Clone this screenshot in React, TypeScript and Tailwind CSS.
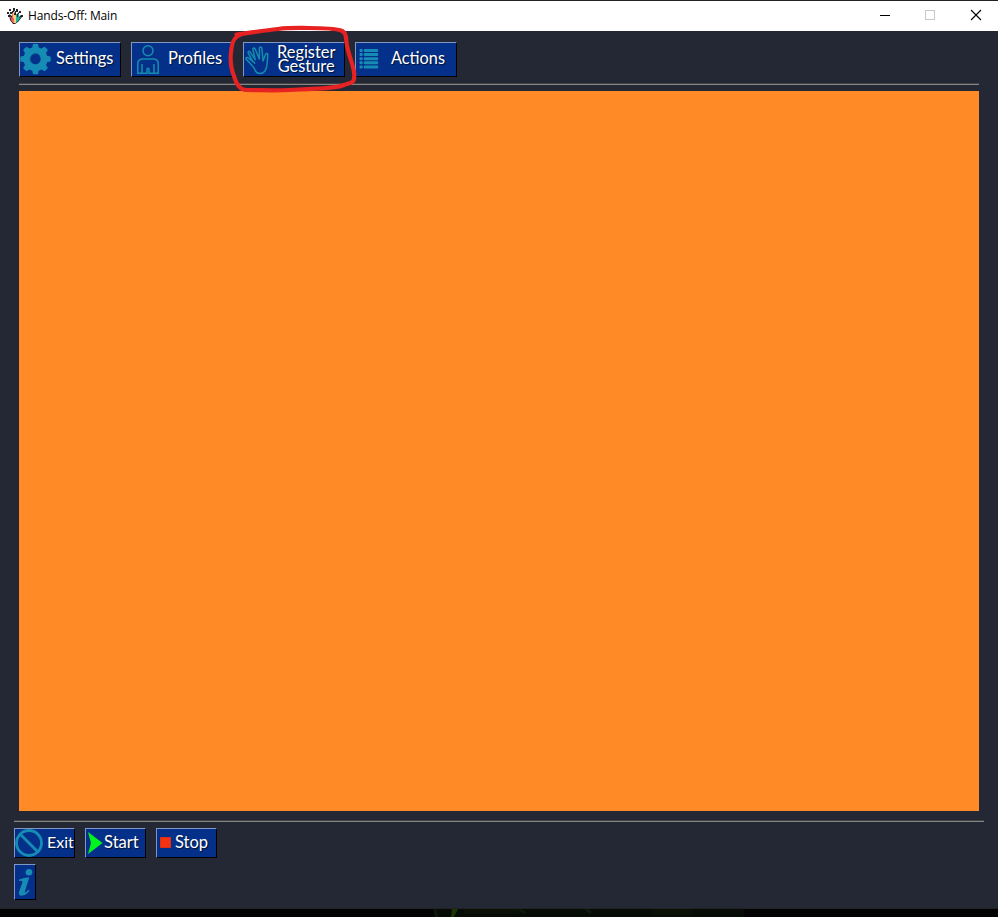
import React from "react";

const label =
  "relative -top-px whitespace-nowrap font-['Lato','Noto_Sans',sans-serif] text-white [text-shadow:1px_1px_1px_#000a]";
const button =
  "flex items-center bg-[#05308a] border border-t-[#7f97c4] border-l-[#7f97c4] border-b-black border-r-black";

function AppIcon() {
  return (
    <svg className="h-4 w-4" viewBox="0 0 16 16">
      <path d="M0 4h2v2H0zM2 1h2v2H2zM3 4h2v2H3zM6 0h2v3H6zM9 1h2v3H9zM12 3h2v2h-2zM14 7h2v2h-2zM1 7h2v2H1z" fill="#26242c" />
      <path d="M2 6l3 2V3h2v3l1-3h1v4l3-3v5l2-2 1 2-4 5-3 2H6L3 12z" fill="#202028" />
      <path d="M3 8l2 2V5h2v10H6l-2-3z" fill="#f06a61" />
      <path d="M6 4h1v6H6zM7 7h2v8H7z" fill="#f5cf79" />
      <path d="M9 6h1v3h1V6h1v4l1-1h1l-3 4-2 2z" fill="#1eb49b" />
      <path d="M4 10h2v2H4z" fill="#e94570" />
    </svg>
  );
}

function Gear() {
  return (
    <svg className="-mt-0.5 h-8 w-8 shrink-0" viewBox="0 0 32 32">
      <g fill="#168cb5">
        {[0, 45, 90, 135].map((a) => (
          <path key={a} transform={`rotate(${a} 15.5 16)`} d="M12.2 5l.8-4q2.5-.6 5 0L18.8 5v22l-.8 4q-2.5.6-5 0L12.2 27z" />
        ))}
      </g>
      <circle cx="15.5" cy="16" r="12" fill="#168cb5" />
      <circle cx="15.5" cy="16" r="5.2" fill="#05308a" />
      <path d="M11.7 19.8A5.4 5.4 0 0 1 19.5 12.2" fill="none" stroke="#0b5793" strokeWidth="1" />
    </svg>
  );
}

function Person() {
  return (
    <svg className="-mt-0.5 h-8 w-8 shrink-0" viewBox="0 0 32 32" fill="none" stroke="#168cad" strokeWidth="1.5">
      <circle cx="16" cy="7.8" r="5" />
      <path d="M10 21v9.2H5.8V21q0-5 5-5h10.4q5 0 5 5v9.2H22V21M10 30.2h5v-4q0-1 1-1t1 1v4h5" />
    </svg>
  );
}

function Hand() {
  return (
    <svg className="-mt-0.5 -ml-px h-8 w-8 shrink-0" viewBox="0 0 32 32" fill="none" stroke="#168cad" strokeWidth="1.5" strokeLinecap="round" strokeLinejoin="round">
      <path d="M9 22.5L3 16q-.2-2 1.8-1.5l4.7 3.7L5 9.6q.2-2 2-.8l5.2 7.8L9.8 5.8q.8-1.8 2.3 0L16.3 16 16.4 5q1.2-1.8 2.4 0L20 18l2.8-7.2q1.8-1 2 .8L24.2 20q-.4 5-2.2 8-2 2.6-5 2.6-3.6-.2-5-3.6-.8-2.5-3-4.5" />
      <path d="M9.5 18.2q1.6.6 2.2 2" />
    </svg>
  );
}

function List() {
  return (
    <svg className="-mt-0.5 h-8 w-8 shrink-0" viewBox="0 0 32 32" fill="#168cb5">
      {[6, 10.1, 14.2, 18.3, 22.4].map((y) => (
        <g key={y}>
          <rect x="3.5" y={y} width="3.2" height="3" rx="1" />
          <rect x="7.8" y={y} width="14.4" height="3" rx="1" />
        </g>
      ))}
    </svg>
  );
}

export default function App() {
  return (
    <div className="relative flex h-[917px] w-[998px] flex-col overflow-hidden bg-[#242834]">
      <header className="flex h-[31px] shrink-0 items-center border-t border-[#222] bg-white pl-[7px]">
        <AppIcon />
        <span className="ml-[5px] whitespace-nowrap font-['Open_Sans','Noto_Sans',sans-serif] text-[12px] leading-4 tracking-[-0.14px] text-black">Hands-Off: Main</span>
        <svg className="ml-auto h-[30px] w-[138px]" viewBox="0 0 138 30" fill="none" shapeRendering="crispEdges">
          <path d="M20 14.5h10" stroke="#000" />
          <rect x="65.5" y="9.5" width="9" height="9" stroke="#c8c8c8" />
          <path d="M111 9l10 10M121 9l-10 10" stroke="#000" strokeWidth="1.1" shapeRendering="auto" />
        </svg>
      </header>

      <nav className="mt-[11px] ml-[19px] flex h-[35px] shrink-0 gap-[10px]">
        <button className={`${button} w-[102px]`}>
          <Gear />
          <span className={`${label} ml-1 text-[16.4px]`}>Settings</span>
        </button>
        <button className={`${button} w-[102px]`}>
          <Person />
          <span className={`${label} ml-1 text-[16.6px]`}>Profiles</span>
        </button>
        <button className={`${button} w-[102px]`}>
          <Hand />
          <span className={`${label} ml-[2px] flex flex-col items-center text-[16.4px] leading-[14px]`}>
            <span>Register</span>
            <span>Gesture</span>
          </span>
        </button>
        <button className={`${button} w-[102px]`}>
          <List />
          <span className={`${label} ml-[3px] text-[16.3px]`}>Actions</span>
        </button>
      </nav>

      <div className="mt-[6px] ml-[19px] h-[2px] w-[960px] shrink-0 border-t border-b border-t-[#414141] border-b-[#858585]" />
      <main className="mt-[6px] ml-[19px] h-[720px] w-[960px] shrink-0 bg-[#ff8a26]" />
      <div className="mt-[9px] ml-[14px] h-[2px] w-[970px] shrink-0 border-t border-b border-t-[#414141] border-b-[#858585]" />

      <div className="mt-[6px] ml-[14px] flex h-[30px] shrink-0 gap-[10px]">
        <button className={`${button} w-[61px]`}>
          <svg className="h-7 w-7 shrink-0" viewBox="0 0 28 28" fill="none" stroke="#168cb5" strokeWidth="2.8">
            <circle cx="14" cy="14" r="12.5" />
            <path d="M5.5 5.5l17 17" />
          </svg>
          <span className={`${label} ml-1 text-[16px]`}>Exit</span>
        </button>
        <button className={`${button} w-[61px]`}>
          <svg className="h-7 w-[18px] shrink-0" viewBox="0 0 18 28">
            <path d="M2 3l14.5 11L2 25l3-11z" fill="#00f51e" />
          </svg>
          <span className={`${label} text-[16.6px]`}>Start</span>
        </button>
        <button className={`${button} w-[61px]`}>
          <span className="-mt-0.5 ml-[3px] h-[11px] w-[11px] shrink-0 border border-[#d9301b] bg-[#f53311]" />
          <span className={`${label} ml-1 text-[16.5px]`}>Stop</span>
        </button>
      </div>
      <button className={`${button} mt-[6px] ml-[14px] h-[36px] w-[22px] shrink-0`}>
        <svg className="h-[34px] w-[20px]" viewBox="0 0 20 34" fill="#168cb5">
          <circle cx="14" cy="7.3" r="3.3" />
          <path d="M4 14.5q5-1.7 10.3-2.2L10 26q-.5 2 .8 1.3l3-2.6.9.9q-4 5.2-8 5.2-3.6 0-2.5-4.2L7.3 17.5q.4-1.7-1-1.7L4 16z" />
        </svg>
      </button>

      <footer className="mt-auto flex h-[9px] shrink-0 border-t border-[#222] bg-[#030303]">
        <svg className="ml-[434px] h-2 w-[310px]" viewBox="0 0 310 8">
          <path d="M0 0h310v8H0z" fill="#060b05" />
          <path d="M30 0h55v5H30zM218 0h40v6h-40z" fill="#0a1006" />
          <path d="M18 0h6l-4 8h-3z" fill="#1b3508" />
          <path d="M0 0l3 8M85 0l6 4M152 0l5 4" stroke="#0e1808" strokeWidth="3" />
        </svg>
      </footer>

      <svg className="pointer-events-none absolute top-5 left-[225px] h-20 w-[140px]" viewBox="225 20 140 80" fill="none" stroke="#e62222" strokeWidth="4.2" strokeLinecap="round" strokeLinejoin="round">
        <path d="M236.5 34.5C249 33 264 30.5 278 29C290 27.5 299 28 309 28C320 28 336 29 341 30.5C346 32 346 37 346.5 42C347.5 54 354 65 354.3 75C354.5 84 351 82.5 344 85C335 89 316 88.5 300 89.5C281 91 262 90 246 90C239 90 236 83 234 76C230 67 230.5 55 231.5 48C232.5 41 236 36 240 35" />
      </svg>
    </div>
  );
}
